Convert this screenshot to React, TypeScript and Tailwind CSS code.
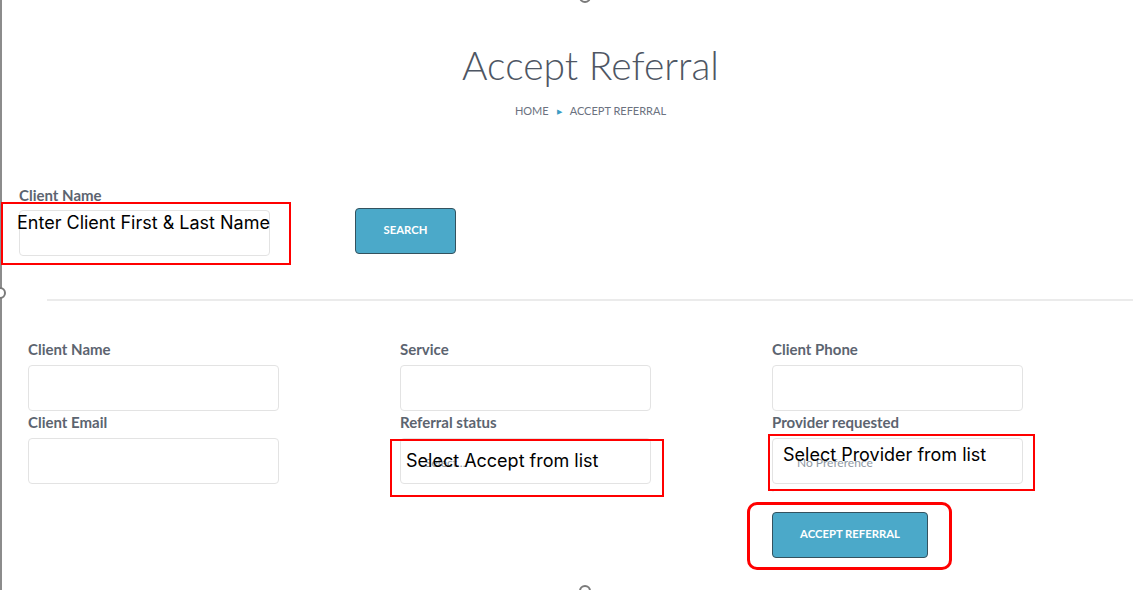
import React from "react";

const LATO = { fontFamily: "Lato, 'Open Sans', sans-serif" };

function Field({ label, placeholder }: { label: string; placeholder?: string }) {
  return (
    <div className="flex w-[251px] flex-col">
      <label className="h-[18px] text-[15px] font-bold leading-[18px] text-[#5c6470]">{label}</label>
      <div className="mt-[7px] flex h-[46px] items-center rounded-[4px] border border-[#e3e3e3] bg-white pl-6 pt-[4px] text-[12px] text-[#8f99a4]">
        {placeholder}
      </div>
    </div>
  );
}

function Note({ className, text }: { className: string; text: string }) {
  return (
    <span
      className={`absolute whitespace-nowrap text-[18px] leading-none text-black ${className}`}
      style={{ fontFamily: "Inter, 'Noto Sans', sans-serif" }}
    >
      {text}
    </span>
  );
}

export default function App() {
  return (
    <div className="relative h-[590px] w-[1147px] overflow-hidden bg-white" style={LATO}>
      {/* selection frame of the pasted picture */}
      <div className="absolute left-0 top-0 h-full w-[2px] bg-[#8c8c8c]" />
      <div className="absolute left-[-6px] top-[287px] h-[12px] w-[12px] rounded-full border-2 border-[#7a7a7a] bg-white" />
      <div className="absolute left-[579px] top-[-9px] h-[12px] w-[12px] rounded-full border-2 border-[#7a7a7a] bg-white" />
      <div className="absolute left-[579px] top-[585px] h-[12px] w-[12px] rounded-full border-2 border-[#7a7a7a] bg-white" />

      <header className="flex flex-col items-center pl-[34px] pt-[40px]">
        <h1 className="text-[39px] font-light leading-[50px] text-[#4e5663]">Accept Referral</h1>
        <nav className="mt-[13px] flex items-center gap-[8px] text-[11px] text-[#6b7280]">
          <span>HOME</span>
          <span className="text-[7px] text-[#3a9cc4]">&#9654;</span>
          <span>ACCEPT REFERRAL</span>
        </nav>
      </header>

      <section className="mt-[66px] flex items-end gap-[85px] pl-[19px]">
        <div className="flex w-[251px] flex-col">
          <label className="text-[15px] font-bold leading-[18px] text-[#5c6470]">Client Name</label>
          <div className="mt-[6px] h-[46px] rounded-[4px] border border-[#e3e3e3] bg-white" />
        </div>
        <button className="mb-[2px] h-[46px] w-[101px] rounded-[4px] border-[1.5px] border-[#34525e] bg-[#4ba9c9] text-[11.3px] font-bold text-white">
          SEARCH
        </button>
      </section>

      <hr className="ml-[47px] mt-[43px] w-[1086px] border-t-2 border-[#ebebeb]" />

      <section className="mt-[39px] grid grid-cols-[372px_372px_251px] gap-y-[2px] pl-[28px]">
        <Field label="Client Name" />
        <Field label="Service" />
        <Field label="Client Phone" />
        <Field label="Client Email" />
        <Field label="Referral status" placeholder="Select..." />
        <Field label="Provider requested" placeholder="No Preference" />
        <div />
        <div />
        <div className="flex flex-col">
          <span className="h-[26px] text-[9px] leading-[14px] text-[#9aa3ad]">'</span>
          <button className="h-[46px] w-[156px] rounded-[4px] border-[1.5px] border-[#34525e] bg-[#4ba9c9] text-[11.3px] font-bold text-white">
            ACCEPT REFERRAL
          </button>
        </div>
      </section>

      {/* annotations */}
      <div className="absolute left-[1px] top-[202px] h-[63px] w-[290px] border-2 border-[#ff0000]" />
      <Note className="left-[17px] top-[214px]" text="Enter Client First & Last Name" />
      <div className="absolute left-[390px] top-[439px] h-[58px] w-[274px] border-2 border-[#ff0000]" />
      <Note className="left-[406px] top-[452px]" text="Select Accept from list" />
      <div className="absolute left-[768px] top-[434px] h-[57px] w-[267px] border-2 border-[#ff0000]" />
      <Note className="left-[783px] top-[446px]" text="Select Provider from list" />
      <div className="absolute left-[747px] top-[502px] h-[68px] w-[205px] rounded-[10px] border-[3px] border-[#ff0000]" />
    </div>
  );
}
